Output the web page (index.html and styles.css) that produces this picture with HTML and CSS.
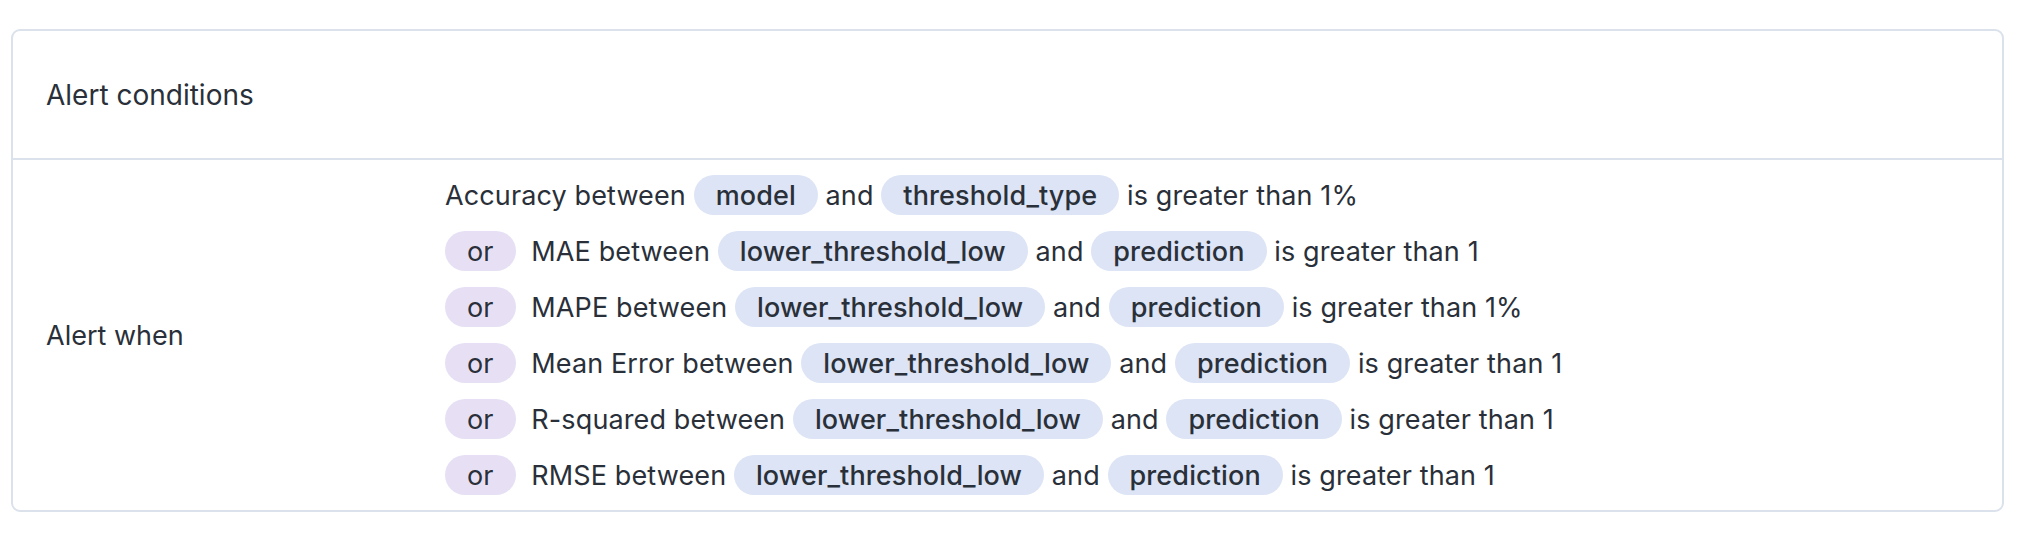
FILE: index.html
```html
<!DOCTYPE html>
<html>
<head>
<meta charset="utf-8">
<link rel="stylesheet" href="styles.css">
</head>
<body>
<div class="card">
  <div class="card-header">Alert conditions</div>
  <div class="card-body">
    <div class="label">Alert when</div>
    <div class="conditions">
      <div class="row">Accuracy between <span class="pill">model</span> and <span class="pill">threshold_type</span> is greater than 1%</div>
      <div class="row"><span class="pill or">or</span> MAE between <span class="pill">lower_threshold_low</span> and <span class="pill">prediction</span> is greater than 1</div>
      <div class="row"><span class="pill or">or</span> MAPE between <span class="pill">lower_threshold_low</span> and <span class="pill">prediction</span> is greater than 1%</div>
      <div class="row"><span class="pill or">or</span> Mean Error between <span class="pill">lower_threshold_low</span> and <span class="pill">prediction</span> is greater than 1</div>
      <div class="row"><span class="pill or">or</span> R-squared between <span class="pill">lower_threshold_low</span> and <span class="pill">prediction</span> is greater than 1</div>
      <div class="row"><span class="pill or">or</span> RMSE between <span class="pill">lower_threshold_low</span> and <span class="pill">prediction</span> is greater than 1</div>
    </div>
  </div>
</div>
</body>
</html>
```

FILE: styles.css
```css
html, body {
  margin: 0;
  padding: 0;
  background: #ffffff;
}
body {
  font-family: Inter, "Noto Sans", sans-serif;
  font-size: 27px;
  color: #2a3039;
  padding: 29px 14px 0 11px;
}
.card {
  border: 2px solid #dbe2ec;
  border-radius: 9px;
}
.card-header {
  height: 127px;
  display: flex;
  align-items: center;
  padding-left: 33px;
  font-size: 28px;
  border-bottom: 2px solid #dbe2ec;
}
.card-body {
  display: grid;
  grid-template-columns: 399px 1fr;
  padding: 15px 33px 15px 33px;
  align-items: center;
}
.conditions {
  display: flex;
  flex-direction: column;
  gap: 16px;
  letter-spacing: 0.12px;
}
.row {
  height: 40px;
  display: flex;
  align-items: center;
  white-space: pre;
}
.pill {
  display: inline-flex;
  align-items: center;
  height: 40px;
  padding: 0 22px;
  border-radius: 20px;
  background: #dce4f5;
  font-weight: 450;
}
.pill.or {
  background: #e7e0f5;
  margin-right: 8px;
  font-weight: 400;
}
```
